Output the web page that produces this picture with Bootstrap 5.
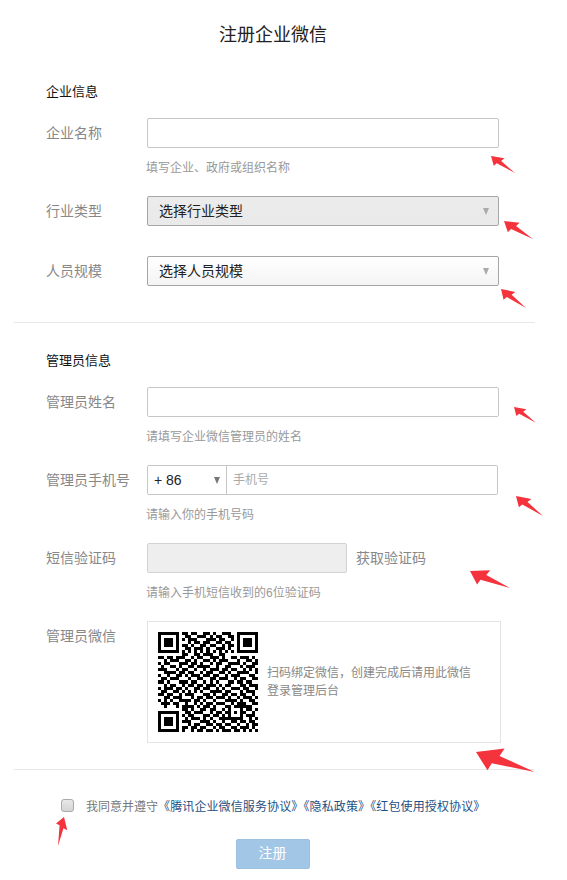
<!doctype html>
<html lang="zh-CN">
<head>
<meta charset="utf-8">
<title>注册企业微信</title>
<link href="https://cdn.jsdelivr.net/npm/bootstrap@5.3.0/dist/css/bootstrap.min.css" rel="stylesheet">
<style>
html,body{background:#fff;overflow:hidden}
body{font-family:"Liberation Sans","Noto Sans CJK SC",sans-serif;font-size:14px;color:#222}
.reg-page{position:relative;width:567px;height:880px;padding-top:22px}
.reg-title{font-size:18px;line-height:26px;font-weight:400;text-align:center;margin:0 0 33px -21px;color:#222}
.reg-section{padding-left:46px}
.reg-head{font-size:13px;line-height:20px;font-weight:400;color:#111;padding-top:1px;margin:0 0 16px}
.reg-row{margin-bottom:20px}
.reg-row.tight{margin-bottom:30px}
.reg-section > .reg-row:last-child{margin-bottom:0}
.reg-label{width:101px;flex:none;line-height:30px;color:#888;white-space:nowrap}
.reg-field{width:352px;flex:none}
.reg-hint{font-size:12px;line-height:18px;color:#999;margin:11px 0 -1px -1px}
.form-control.reg-input,.form-select.reg-select{height:30px;min-height:30px;border-radius:2px;border:1px solid #c6c6c6;box-shadow:none;font-size:14px;line-height:20px;padding:4px 11px;color:#222}
.form-select.reg-select{border-color:#a6a6a6;background-color:#fff;background-image:url("data:image/svg+xml,%3csvg xmlns='http://www.w3.org/2000/svg' viewBox='0 0 7 8'%3e%3cpath fill='%23aaa' d='M0 0h7L3.5 8z'/%3e%3c/svg%3e"),linear-gradient(#fff,#f4f4f4);background-repeat:no-repeat;background-position:right 9px center,0 0;background-size:6px 7px,100% 100%}
.form-select.reg-select.is-hover{background-color:#ebebeb;background-image:url("data:image/svg+xml,%3csvg xmlns='http://www.w3.org/2000/svg' viewBox='0 0 7 8'%3e%3cpath fill='%23aaa' d='M0 0h7L3.5 8z'/%3e%3c/svg%3e"),linear-gradient(#ececec,#e9e9e9)}
.reg-phone{width:351px;flex-wrap:nowrap}
.form-select.reg-select.reg-code{flex:0 0 80px;width:80px;padding:4px 6px;border-color:#c6c6c6;background-image:url("data:image/svg+xml,%3csvg xmlns='http://www.w3.org/2000/svg' viewBox='0 0 7 8'%3e%3cpath fill='%23777' d='M0 0h7L3.5 8z'/%3e%3c/svg%3e");background-position:right 6px center;background-size:6px 7px;border-radius:2px 0 0 2px}
.form-control.reg-input.reg-tel{font-size:12px;padding:4px 6px;border-radius:0 2px 2px 0;margin-left:-1px}
.reg-tel::placeholder{color:#aaa}
.form-control.reg-input.reg-sms{width:200px;flex:none;background:#eee;border-color:#d2d2d2}
.reg-sms-link{color:#888;line-height:30px;margin-left:9px;text-decoration:none}
.reg-qr-box{width:354px;flex:none;height:122px;border:1px solid #e4e4e4;padding:10px 10px}
.reg-qr{width:100px;height:100px;flex:none;display:block}
.reg-qr-text{font-size:12px;line-height:18px;color:#888;margin-left:9px;width:220px}
.reg-rule{height:1px;background:#e8e8e8;border:0;opacity:1;margin:0 0 0 14px;width:521px}
.sep-a{margin-top:36px}
.sep-b{margin-top:26px}
.sec-b{margin-top:27px}
.reg-agree{padding-left:61px;margin-top:27px;height:20px}
.form-check-input.reg-check{width:13px;height:13px;margin:2px 12px 0 0;border:1px solid #aaa;border-radius:3px;background:linear-gradient(#e8e8e8,#d4d4d4);flex:none}
.reg-agree-text{font-size:12px;line-height:20px;color:#777;white-space:nowrap}
.reg-agree-text a{color:#1f4f82;text-decoration:none;letter-spacing:.12px}
.btn.reg-submit{display:block;width:74px;height:30px;margin:22px auto 0 236px;padding:0 1px 1px 0;font-size:14px;line-height:27px;color:#fff;background:#a2c6e5;border:1px solid #9cc0e0;border-radius:2px;opacity:1}
.reg-marks{position:absolute;left:0;top:0;width:567px;height:880px;pointer-events:none}
.reg-marks use{fill:#f4333c}
</style>
</head>
<body>
<div class="reg-page">
  <h1 class="reg-title">注册企业微信</h1>

  <section class="reg-section">
    <h2 class="reg-head">企业信息</h2>
    <div class="d-flex reg-row">
      <label class="reg-label" for="corp">企业名称</label>
      <div class="reg-field">
        <input id="corp" class="form-control reg-input" type="text">
        <div class="reg-hint">填写企业、政府或组织名称</div>
      </div>
    </div>
    <div class="d-flex reg-row tight">
      <label class="reg-label" for="ind">行业类型</label>
      <div class="reg-field">
        <select id="ind" class="form-select reg-select is-hover"><option>选择行业类型</option></select>
      </div>
    </div>
    <div class="d-flex reg-row">
      <label class="reg-label" for="size">人员规模</label>
      <div class="reg-field">
        <select id="size" class="form-select reg-select"><option>选择人员规模</option></select>
      </div>
    </div>
  </section>

  <hr class="reg-rule sep-a">

  <section class="reg-section sec-b">
    <h2 class="reg-head">管理员信息</h2>
    <div class="d-flex reg-row">
      <label class="reg-label" for="admin">管理员姓名</label>
      <div class="reg-field">
        <input id="admin" class="form-control reg-input" type="text">
        <div class="reg-hint">请填写企业微信管理员的姓名</div>
      </div>
    </div>
    <div class="d-flex reg-row">
      <label class="reg-label" for="tel">管理员手机号</label>
      <div class="reg-field">
        <div class="input-group reg-phone">
          <select class="form-select reg-select reg-code" aria-label="区号"><option>+ 86</option></select>
          <input id="tel" class="form-control reg-input reg-tel" type="text" placeholder="手机号">
        </div>
        <div class="reg-hint">请输入你的手机号码</div>
      </div>
    </div>
    <div class="d-flex reg-row">
      <label class="reg-label" for="sms">短信验证码</label>
      <div class="reg-field">
        <div class="d-flex">
          <input id="sms" class="form-control reg-input reg-sms" type="text" disabled>
          <a class="reg-sms-link" href="#">获取验证码</a>
        </div>
        <div class="reg-hint">请输入手机短信收到的6位验证码</div>
      </div>
    </div>
    <div class="d-flex reg-row">
      <div class="reg-label">管理员微信</div>
      <div class="reg-qr-box d-flex align-items-center">
        <svg class="reg-qr" id="qr" viewBox="0 0 33 33" shape-rendering="crispEdges" role="img" aria-label="二维码"><path id="qrp" fill="#000"/></svg>
        <div class="reg-qr-text">扫码绑定微信，创建完成后请用此微信<br>登录管理后台</div>
      </div>
    </div>
  </section>

  <hr class="reg-rule sep-b">

  <div class="d-flex align-items-start reg-agree">
    <input class="form-check-input reg-check" type="checkbox" aria-label="同意">
    <div class="reg-agree-text">我同意并遵守<a href="#">《腾讯企业微信服务协议》《隐私政策》《红包使用授权协议》</a></div>
  </div>

  <button class="btn reg-submit" type="button" disabled>注册</button>

  <svg class="reg-marks" viewBox="0 0 567 880" aria-hidden="true">
    <defs><polygon id="mk" points="0,0 42,-20 38,-6 100,0 30,9 27,22"/></defs>
    <use href="#mk" transform="translate(491 156) rotate(35.3) scale(.294)"/>
    <use href="#mk" transform="translate(504 221) rotate(31.8) scale(.34)"/>
    <use href="#mk" transform="translate(501 289) rotate(37.2) scale(.314)"/>
    <use href="#mk" transform="translate(514 407) rotate(36) scale(.27)"/>
    <use href="#mk" transform="translate(516 496) rotate(36.5) scale(.336)"/>
    <use href="#mk" transform="translate(470 571) rotate(23) scale(.435)"/>
    <use href="#mk" transform="translate(476 752) rotate(18.7) scale(.62)"/>
    <use href="#mk" transform="translate(64 817) rotate(101.7) scale(.296)"/>
  </svg>
</div>

<script src="https://cdn.jsdelivr.net/npm/bootstrap@5.3.0/dist/js/bootstrap.bundle.min.js"></script>
<script>
var rows=[
"111111101101100110100111001111111",
"100000100110011101011001101000001",
"101110101011100011101100101011101",
"101110100010110110011011001011101",
"101110101101001101100101101011101",
"100000100110111010011101001000001",
"111111101010101010101010101111111",
"000000001100110111001100000000000",
"110110111001011001110100110111010",
"001011100110100110101110001001101",
"101100011101101001011001111010011",
"010011010011011110010011000101110",
"111000101100100101110110110010101",
"001111011011001011001101001111001",
"100100110101110110110010111000110",
"011011100010011001101110010110011",
"110100011101100101010001101101100",
"001011001011011011101011000110111",
"101110110100110110010100111011001",
"011001101010101001111011000101110",
"110110010111000110100110110110010",
"001101110001011011011101001011101",
"101010011110110100100011110100110",
"011101100100101011011100101110011",
"001000101111010110100011011111100",
"000000001101001101100101000101101",
"111111100110111001011011010110010",
"100000101011000110110101000101110",
"101110100101110101001111111100101",
"101110101110001110100100110110110",
"101110100010110011011011001001011",
"100000101101101100101100110111010",
"111111101001011011010111011010101"];
var d="";
rows.forEach(function(r,y){for(var x=0;x<r.length;x++){if(r[x]==="1"){d+="M"+x+" "+y+"h1v1h-1z";}}});
document.getElementById("qrp").setAttribute("d",d);
</script>
</body>
</html>
